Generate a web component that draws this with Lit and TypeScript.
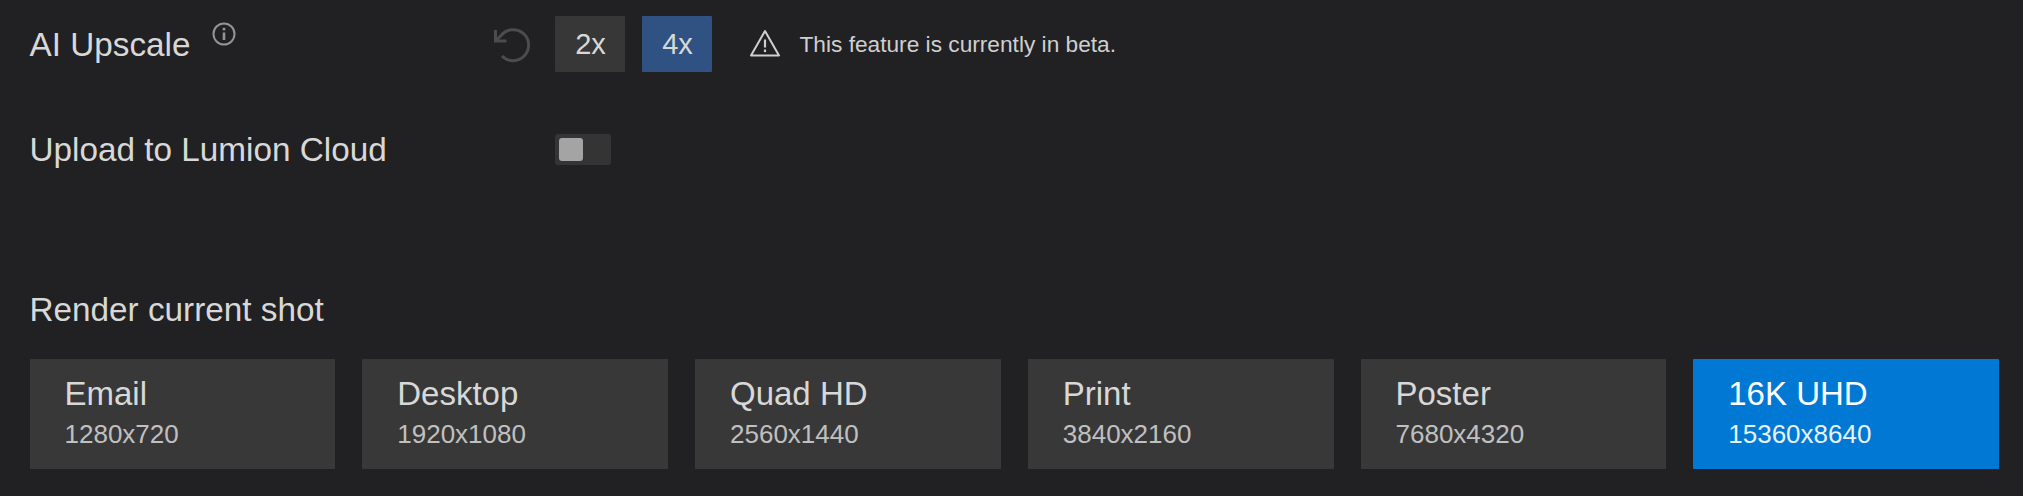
import { LitElement, html, css } from "lit";
import { customElement } from "lit/decorators.js";

const presets = [
  ["Email", "1280x720"],
  ["Desktop", "1920x1080"],
  ["Quad HD", "2560x1440"],
  ["Print", "3840x2160"],
  ["Poster", "7680x4320"],
  ["16K UHD", "15360x8640"],
];

@customElement("app-root")
export class AppRoot extends LitElement {
  static styles = css`
    :host {
      display: block;
      width: 2023px;
      height: 496px;
      background: #212123;
      color: #d8d8d8;
      font-family: "Liberation Sans", Arial, sans-serif;
      overflow: hidden;
    }
    .page { padding: 16px 24px 0 29.5px; }
    .row { display: flex; align-items: center; }
    .label-col { width: 525px; height: 56px; display: flex; align-items: flex-start; flex: none; }
    .title { font-size: 33.3px; line-height: 56px; margin-top: 1px; white-space: nowrap; }
    .info { margin: 6px 0 0 21px; display: block; }
    .upscale { height: 56px; }
    .label-col.first { width: 461px; }
    .undo { display: block; margin-right: 26px; width: 38px; height: 38px; overflow: visible; }
    .btn {
      width: 70px; height: 56px; margin-right: 17px; padding-left: 2px; box-sizing: border-box;
      display: flex; align-items: center; justify-content: center;
      background: #373737; font-size: 29px; border-radius: 1px;
    }
    .btn.on { background: #2f5283; }
    .warn { display: block; margin-left: 20px; }
    .note { margin-left: 19px; font-size: 22.7px; color: #cfcfcf; white-space: nowrap; }
    .upload { margin-top: 49px; height: 56px; }
    .toggle {
      width: 56px; height: 31px; background: #343434; border-radius: 3px;
      padding: 4px; box-sizing: border-box; display: flex;
    }
    .knob { width: 24px; height: 23px; background: #a4a4a4; border-radius: 3px; }
    .section { font-size: 33.3px; line-height: 40px; margin-top: 113px; }
    .grid {
      display: grid; grid-template-columns: repeat(6, 1fr); gap: 27px;
      margin-top: 29px; width: 1969.5px;
    }
    .card {
      height: 110px; background: #383838; box-sizing: border-box;
      padding: 17px 0 0 35px; border-radius: 1px;
    }
    .card.on { background: #0078d4; color: #fff; }
    .name { font-size: 33px; line-height: 36px; }
    .res { font-size: 26px; line-height: 30px; margin-top: 7px; color: #c0c0c0; }
    .card.on .res { color: #e8f2fb; }
  `;

  render() {
    return html`<div class="page">
      <div class="row upscale">
        <div class="label-col first">
          <span class="title">AI Upscale</span>
          <svg class="info" width="24" height="24" viewBox="0 0 24 24" fill="none" stroke="#949494" stroke-width="2">
            <circle cx="12" cy="12" r="10.5"></circle>
            <path d="M12 10.5v7.5" stroke-width="2.6"></path>
            <path d="M12 5.8v2.6" stroke-width="2.6"></path>
          </svg>
        </div>
        <svg class="undo" viewBox="0 0 38 38" fill="none" stroke="#4c4c4c" stroke-width="3">
          <path d="M4.5 16L10 10.5A15.5 15.5 0 1 1 11 31"></path>
          <path d="M4.5 5V16H15.5"></path>
        </svg>
        <div class="btn">2x</div>
        <div class="btn on">4x</div>
        <svg class="warn" width="32" height="30" viewBox="0 0 32 30" fill="none" stroke="#cfcfcf" stroke-width="2" stroke-linejoin="round">
          <path d="M16 2L30 26.5H2Z"></path>
          <path d="M16 10.5v8" stroke-width="2.2"></path>
          <path d="M16 20.5v2.6" stroke-width="2.2"></path>
        </svg>
        <span class="note">This feature is currently in beta.</span>
      </div>
      <div class="row upload">
        <div class="label-col"><span class="title">Upload to Lumion Cloud</span></div>
        <div class="toggle"><div class="knob"></div></div>
      </div>
      <div class="section">Render current shot</div>
      <div class="grid">
        ${presets.map(
          ([n, r], i) => html`<div class="card ${i === 5 ? "on" : ""}">
            <div class="name">${n}</div>
            <div class="res">${r}</div>
          </div>`
        )}
      </div>
    </div>`;
  }
}
